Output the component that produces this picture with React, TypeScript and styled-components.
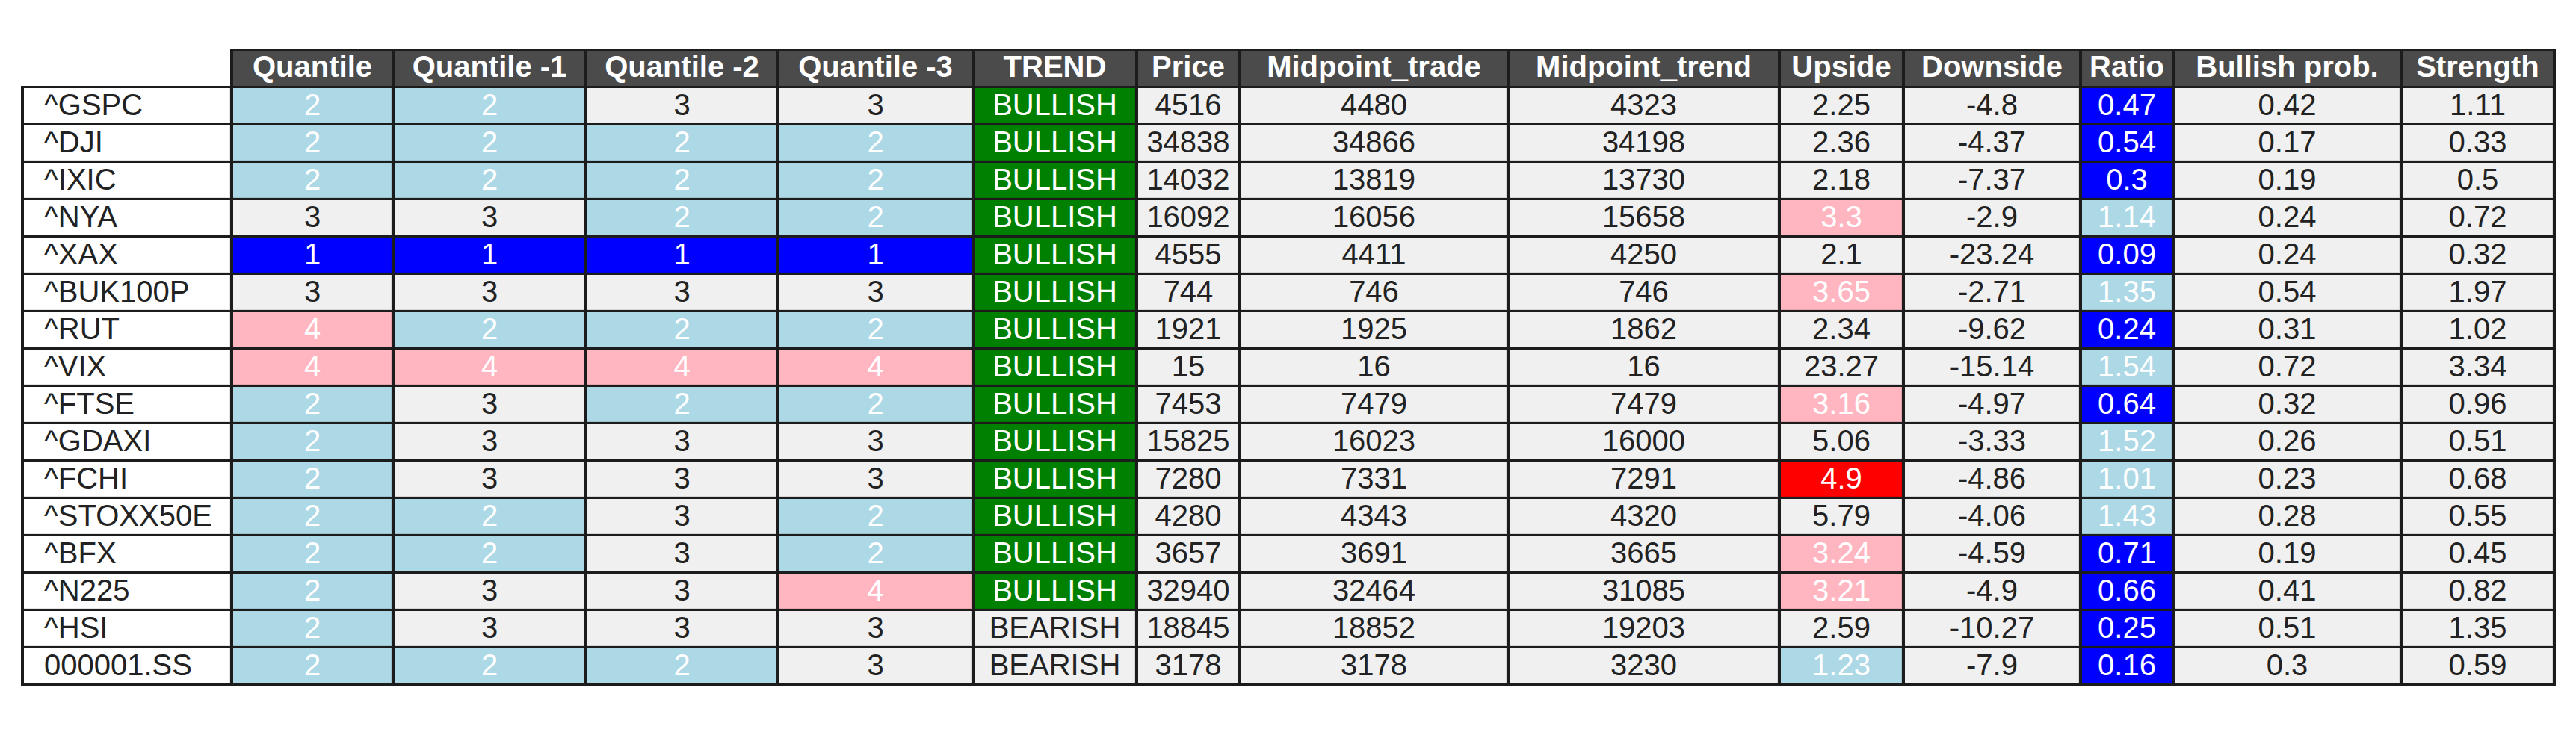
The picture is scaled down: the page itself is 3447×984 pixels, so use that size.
import React from 'react';
import styled, { createGlobalStyle } from 'styled-components';

type Tone = 'plain' | 'sky' | 'pink' | 'blue' | 'red' | 'green';

const GlobalStyle = createGlobalStyle`
  html, body {
    margin: 0;
    padding: 0;
    background: #ffffff;
  }
`;

const tones: Record<Tone, { bg: string; fg: string }> = {
  plain: { bg: '#f0f0f0', fg: '#222222' },
  sky: { bg: '#add8e6', fg: '#ffffff' },
  pink: { bg: '#ffb6c1', fg: '#ffffff' },
  blue: { bg: '#0000ff', fg: '#ffffff' },
  red: { bg: '#ff0000', fg: '#ffffff' },
  green: { bg: '#008000', fg: '#ffffff' },
};

const Page = styled.div`
  padding: 65px 0 0 28px;
`;

const Table = styled.table`
  border-collapse: collapse;
  table-layout: fixed;
  font-family: "Liberation Sans", Arial, sans-serif;
  font-size: 40px;
  line-height: 40px;
`;

const Corner = styled.th`
  border: none;
  background: #ffffff;
  padding: 0;
`;

const HeadCell = styled.th`
  height: 42px;
  padding: 0 0 5px;
  background: #4b4b4b;
  color: #ffffff;
  font-weight: bold;
  text-align: center;
  white-space: nowrap;
  overflow: hidden;
  border-top: 3px solid #1c1c1c;
  border-bottom: 3px solid #1c1c1c;
  border-left: 4px solid #1c1c1c;
  border-right: 4px solid #1c1c1c;
`;

const IndexCell = styled.th`
  height: 43px;
  padding: 0 0 4px 27px;
  background: #ffffff;
  color: #222222;
  font-weight: normal;
  text-align: left;
  white-space: nowrap;
  border-top: 3px solid #1c1c1c;
  border-bottom: 3px solid #1c1c1c;
  border-left: 4px solid #1c1c1c;
  border-right: 4px solid #1c1c1c;
  box-shadow: inset -1px -1px 0 rgba(0, 0, 0, 0.1);
`;

const Cell = styled.td<{ $tone: Tone }>`
  height: 43px;
  padding: 0 0 4px;
  background: ${(p) => tones[p.$tone].bg};
  color: ${(p) => tones[p.$tone].fg};
  text-align: center;
  white-space: nowrap;
  border-top: 3px solid #1c1c1c;
  border-bottom: 3px solid #1c1c1c;
  border-left: 4px solid #1c1c1c;
  border-right: 4px solid #1c1c1c;
  box-shadow: inset -1px -1px 0 rgba(0, 0, 0, 0.1);
`;

const columns = [
  { label: '', width: 280 },
  { label: 'Quantile', width: 216 },
  { label: 'Quantile -1', width: 258 },
  { label: 'Quantile -2', width: 257 },
  { label: 'Quantile -3', width: 261 },
  { label: 'TREND', width: 219 },
  { label: 'Price', width: 138 },
  { label: 'Midpoint_trade', width: 359 },
  { label: 'Midpoint_trend', width: 363 },
  { label: 'Upside', width: 166 },
  { label: 'Downside', width: 237 },
  { label: 'Ratio', width: 124 },
  { label: 'Bullish prob.', width: 305 },
  { label: 'Strength', width: 205 },
];

// ticker, quantiles, trend, price, mid trade, mid trend, upside, upside tone, downside, ratio, ratio tone, bull, strength
type Row = [string, number[], string, string, string, string, string, Tone, string, string, Tone, string, string];

const rows: Row[] = [
  ['^GSPC', [2, 2, 3, 3], 'BULLISH', '4516', '4480', '4323', '2.25', 'plain', '-4.8', '0.47', 'blue', '0.42', '1.11'],
  ['^DJI', [2, 2, 2, 2], 'BULLISH', '34838', '34866', '34198', '2.36', 'plain', '-4.37', '0.54', 'blue', '0.17', '0.33'],
  ['^IXIC', [2, 2, 2, 2], 'BULLISH', '14032', '13819', '13730', '2.18', 'plain', '-7.37', '0.3', 'blue', '0.19', '0.5'],
  ['^NYA', [3, 3, 2, 2], 'BULLISH', '16092', '16056', '15658', '3.3', 'pink', '-2.9', '1.14', 'sky', '0.24', '0.72'],
  ['^XAX', [1, 1, 1, 1], 'BULLISH', '4555', '4411', '4250', '2.1', 'plain', '-23.24', '0.09', 'blue', '0.24', '0.32'],
  ['^BUK100P', [3, 3, 3, 3], 'BULLISH', '744', '746', '746', '3.65', 'pink', '-2.71', '1.35', 'sky', '0.54', '1.97'],
  ['^RUT', [4, 2, 2, 2], 'BULLISH', '1921', '1925', '1862', '2.34', 'plain', '-9.62', '0.24', 'blue', '0.31', '1.02'],
  ['^VIX', [4, 4, 4, 4], 'BULLISH', '15', '16', '16', '23.27', 'plain', '-15.14', '1.54', 'sky', '0.72', '3.34'],
  ['^FTSE', [2, 3, 2, 2], 'BULLISH', '7453', '7479', '7479', '3.16', 'pink', '-4.97', '0.64', 'blue', '0.32', '0.96'],
  ['^GDAXI', [2, 3, 3, 3], 'BULLISH', '15825', '16023', '16000', '5.06', 'plain', '-3.33', '1.52', 'sky', '0.26', '0.51'],
  ['^FCHI', [2, 3, 3, 3], 'BULLISH', '7280', '7331', '7291', '4.9', 'red', '-4.86', '1.01', 'sky', '0.23', '0.68'],
  ['^STOXX50E', [2, 2, 3, 2], 'BULLISH', '4280', '4343', '4320', '5.79', 'plain', '-4.06', '1.43', 'sky', '0.28', '0.55'],
  ['^BFX', [2, 2, 3, 2], 'BULLISH', '3657', '3691', '3665', '3.24', 'pink', '-4.59', '0.71', 'blue', '0.19', '0.45'],
  ['^N225', [2, 3, 3, 4], 'BULLISH', '32940', '32464', '31085', '3.21', 'pink', '-4.9', '0.66', 'blue', '0.41', '0.82'],
  ['^HSI', [2, 3, 3, 3], 'BEARISH', '18845', '18852', '19203', '2.59', 'plain', '-10.27', '0.25', 'blue', '0.51', '1.35'],
  ['000001.SS', [2, 2, 2, 3], 'BEARISH', '3178', '3178', '3230', '1.23', 'sky', '-7.9', '0.16', 'blue', '0.3', '0.59'],
];

const quantileTone = (q: number): Tone => {
  if (q === 1) return 'blue';
  if (q === 2) return 'sky';
  if (q === 4) return 'pink';
  return 'plain';
};

export default function App() {
  return (
    <Page>
      <GlobalStyle />
      <Table>
        <colgroup>
          {columns.map((c, i) => (
            <col key={i} style={{ width: c.width }} />
          ))}
        </colgroup>
        <thead>
          <tr>
            <Corner />
            {columns.slice(1).map((c) => (
              <HeadCell key={c.label}>{c.label}</HeadCell>
            ))}
          </tr>
        </thead>
        <tbody>
          {rows.map((r) => {
            const [name, qs, trend, price, mTrade, mTrend, up, upTone, down, ratio, ratioTone, bull, strength] = r;
            return (
              <tr key={name}>
                <IndexCell>{name}</IndexCell>
                {qs.map((q, i) => (
                  <Cell key={i} $tone={quantileTone(q)}>{q}</Cell>
                ))}
                <Cell $tone={trend === 'BULLISH' ? 'green' : 'plain'}>{trend}</Cell>
                <Cell $tone="plain">{price}</Cell>
                <Cell $tone="plain">{mTrade}</Cell>
                <Cell $tone="plain">{mTrend}</Cell>
                <Cell $tone={upTone}>{up}</Cell>
                <Cell $tone="plain">{down}</Cell>
                <Cell $tone={ratioTone}>{ratio}</Cell>
                <Cell $tone="plain">{bull}</Cell>
                <Cell $tone="plain">{strength}</Cell>
              </tr>
            );
          })}
        </tbody>
      </Table>
    </Page>
  );
}
